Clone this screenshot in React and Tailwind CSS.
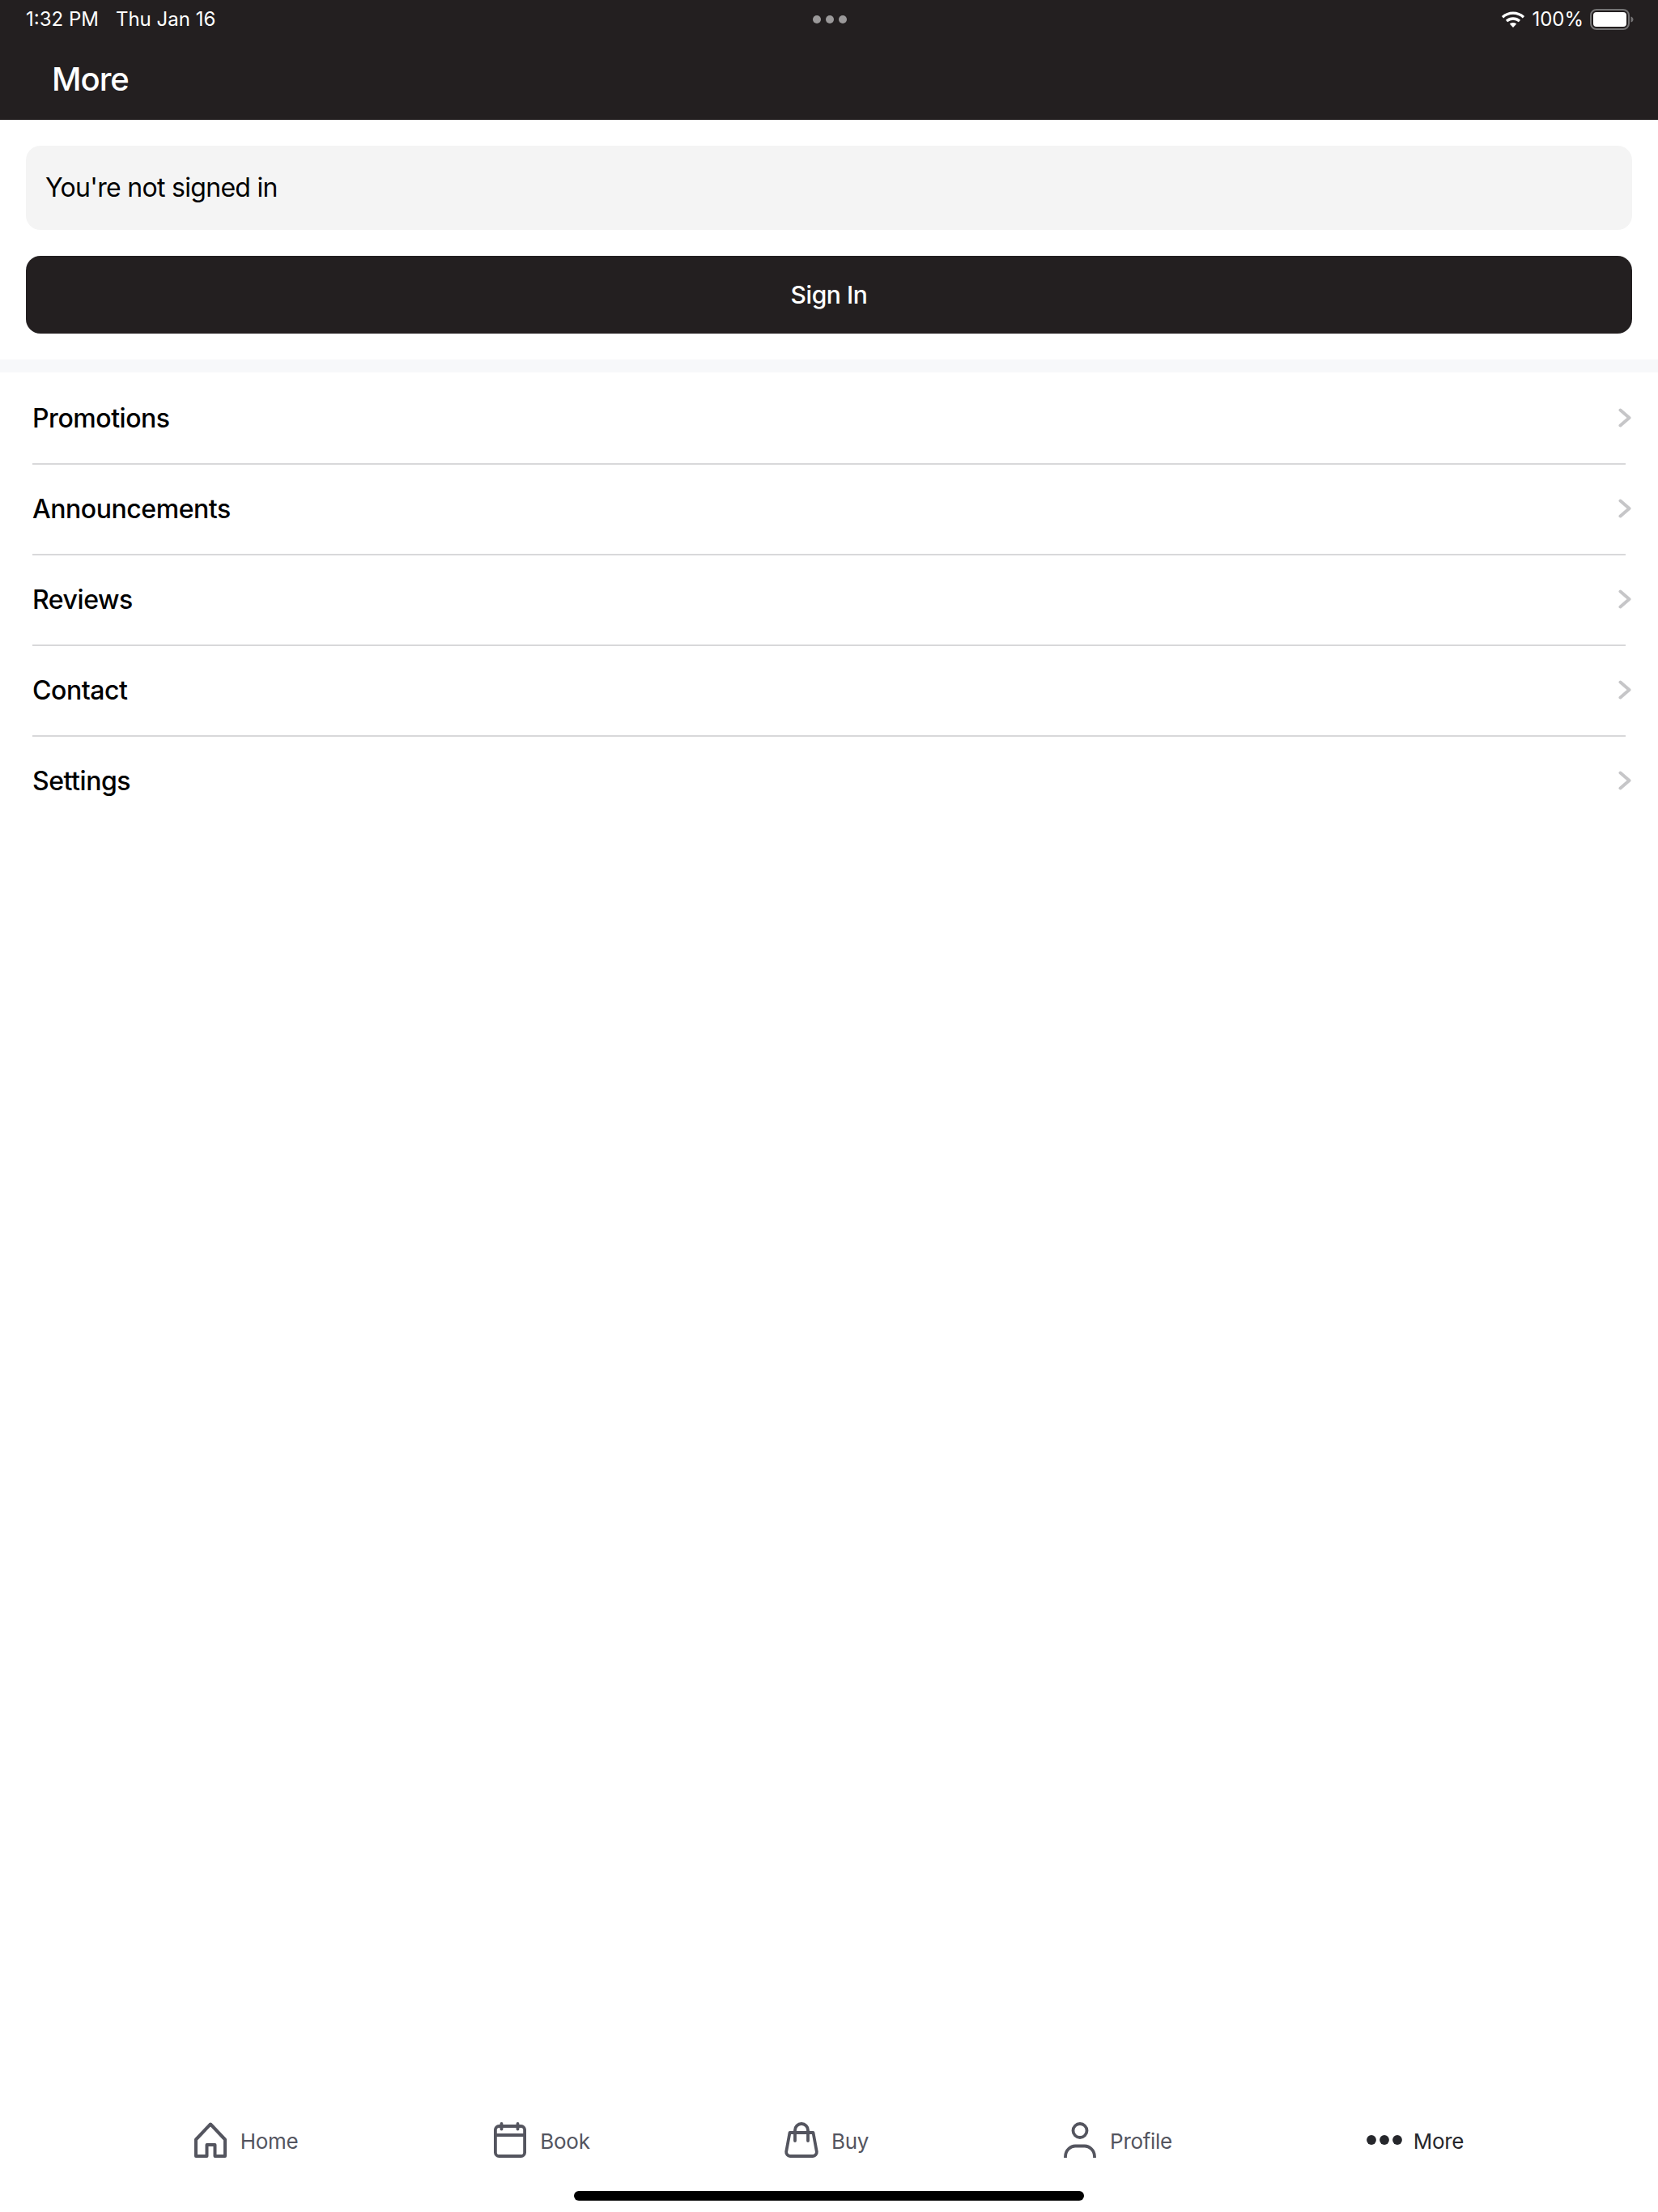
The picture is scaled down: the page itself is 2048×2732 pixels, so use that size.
const menuItems = ['Promotions', 'Announcements', 'Reviews', 'Contact', 'Settings'];

function Wifi() {
    return (
        <svg width="30" height="22" viewBox="0 0 30 22" fill="none" stroke="white" strokeWidth="3.4">
            <path d="M2 8.2 C9.5 1.4 20.5 1.4 28 8.2" />
            <path d="M7 13 C11.6 9 18.4 9 23 13" />
            <path d="M15 21 L10.8 16.6 C13.2 14.6 16.8 14.6 19.2 16.6 Z" fill="white" stroke="none" />
        </svg>
    );
}

function Battery() {
    return (
        <svg width="54" height="26" viewBox="0 0 54 26" fill="none">
            <rect x="1" y="1" width="47" height="24" rx="7" stroke="#747374" strokeWidth="2" />
            <rect x="4" y="4" width="41" height="18" rx="4" fill="white" />
            <path d="M50.5 9.5 C52.5 10 53.5 11.5 53.5 13 C53.5 14.5 52.5 16 50.5 16.5 Z" fill="#747374" />
        </svg>
    );
}

function HomeIcon() {
    return (
        <svg width="40" height="44" viewBox="0 0 40 44" fill="none" stroke="#54555f" strokeWidth="4" strokeLinejoin="round">
            <path d="M2 21.5 L20 2.5 L38 21.5 V42 H25.5 V28 H15.5 V42 H2 Z" />
        </svg>
    );
}

function CalendarIcon() {
    return (
        <svg width="40" height="44" viewBox="0 0 40 44" fill="none" stroke="#54555f" strokeWidth="3.8" strokeLinecap="round">
            <rect x="1.9" y="5" width="36.2" height="37" rx="4.5" />
            <path d="M2 16 H38" />
            <path d="M9.5 1.9 V8.5" />
            <path d="M29.5 1.9 V8.5" />
        </svg>
    );
}

function BagIcon() {
    return (
        <svg width="42" height="44" viewBox="0 0 42 44" fill="none" stroke="#54555f" strokeWidth="3.8" strokeLinecap="round" strokeLinejoin="round">
            <path d="M6.5 13 H35.5 L39.8 36.5 A5 5 0 0 1 35 42 H7 A5 5 0 0 1 2.2 36.5 Z" />
            <path d="M13 23 V10 A8 8 0 0 1 29 10 V23" />
        </svg>
    );
}

function PersonIcon() {
    return (
        <svg width="40" height="44" viewBox="0 0 40 44" fill="none" stroke="#54555f" strokeWidth="3.8">
            <circle cx="20" cy="10.5" r="8.5" />
            <path d="M2 44 V42.5 C2 34 9 29.5 14 29.5 H26 C31 29.5 38 34 38 42.5 V44" />
        </svg>
    );
}

function DotsIcon() {
    return (
        <svg width="44" height="12" viewBox="0 0 44 12" fill="#26272c">
            <circle cx="6" cy="6" r="5.9" />
            <circle cx="22" cy="6" r="5.9" />
            <circle cx="38" cy="6" r="5.9" />
        </svg>
    );
}

const tabs = [
    { label: 'Home', icon: <HomeIcon />, width: 'w-[360px]', gap: 'gap-[17px]' },
    { label: 'Book', icon: <CalendarIcon />, width: 'w-[371px]', gap: 'gap-[17px]' },
    { label: 'Buy', icon: <BagIcon />, width: 'w-[332px]', gap: 'gap-[16px]' },
    { label: 'Profile', icon: <PersonIcon />, width: 'w-[388px]', gap: 'gap-[17px]' },
    { label: 'More', icon: <DotsIcon />, width: 'w-[346px]', gap: 'gap-[14px]', active: true },
];

export default function App() {
    return (
        <div className="flex h-[2732px] w-[2048px] flex-col bg-white font-['Inter',sans-serif]">
            <header className="h-[148px] shrink-0 bg-[#231f20] text-white">
                <div className="flex h-[48px] items-center justify-between pl-[32px] pr-[30px] text-[24px]">
                    <div className="flex w-[400px] gap-[21px]">
                        <span>1:32 PM</span>
                        <span>Thu Jan 16</span>
                    </div>
                    <div className="flex gap-[6px]">
                        <span className="h-[10px] w-[10px] rounded-full bg-[#9b999a]"></span>
                        <span className="h-[10px] w-[10px] rounded-full bg-[#9b999a]"></span>
                        <span className="h-[10px] w-[10px] rounded-full bg-[#9b999a]"></span>
                    </div>
                    <div className="flex w-[400px] items-center justify-end gap-[8px]">
                        <Wifi />
                        <span>100%</span>
                        <Battery />
                    </div>
                </div>
                <h1 className="pl-[64px] pt-[26px] text-[40px] font-medium leading-[48px] tracking-[-1px]">More</h1>
            </header>

            <main className="flex-1">
                <div className="flex flex-col gap-[32px] p-[32px]">
                    <div className="flex h-[104px] items-center rounded-[18px] bg-[#f4f4f4] px-[24px] text-[32px] tracking-[-0.7px] text-black">
                        You're not signed in
                    </div>
                    <button type="button" className="flex h-[96px] items-center justify-center rounded-[18px] bg-[#231f20] text-[30px] font-medium tracking-[-0.4px] text-white">
                        Sign In
                    </button>
                </div>
                <div className="h-[16px] bg-[#f7f8fa]"></div>
                <ul className="pt-[2px]">
                    {menuItems.map((item, i) => (
                        <li key={item} className="px-[40px]">
                            <div className={`flex h-[112px] items-center justify-between border-b-2 text-[32px] font-[450] tracking-[-0.45px] text-black ${i < menuItems.length - 1 ? 'border-[#d8d8da]' : 'border-transparent'}`}>
                                <span>{item}</span>
                                <svg className="-mr-[7px] -mt-[2px]" width="16" height="24" viewBox="0 0 16 24" fill="none" stroke="#c6c6c8" strokeWidth="4" strokeLinecap="round" strokeLinejoin="round">
                                    <path d="M2.5 2.5 L13.5 12 L2.5 21.5" />
                                </svg>
                            </div>
                        </li>
                    ))}
                </ul>
            </main>

            <nav className="shrink-0">
                <div className="flex h-[44px] pl-[124px]">
                    {tabs.map((tab) => (
                        <div key={tab.label} className={`flex items-center justify-center ${tab.width} ${tab.gap}`}>
                            {tab.icon}
                            <span className={`pt-[2px] text-[26px] tracking-[-0.3px] ${tab.active ? 'text-[#26272c]' : 'text-[#54555f]'}`}>{tab.label}</span>
                        </div>
                    ))}
                </div>
                <div className="mb-[14px] mt-[41px] flex justify-center">
                    <div className="h-[12px] w-[630px] rounded-full bg-black"></div>
                </div>
            </nav>
        </div>
    );
}
